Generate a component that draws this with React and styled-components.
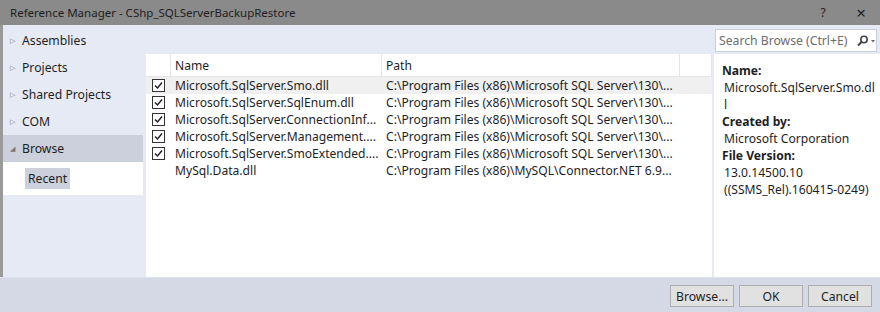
import React from 'react'
import styled, { createGlobalStyle } from 'styled-components'

const Global = createGlobalStyle`
  body {
    margin: 0;
    font-family: 'Noto Sans', 'Open Sans', sans-serif;
    font-size: 12px;
    color: #1e1e1e;
  }
`

const Window = styled.div`
  width: 880px;
  height: 312px;
  display: flex;
  flex-direction: column;
  overflow: hidden;
`

const TitleBar = styled.div`
  height: 25px;
  background: #8a8a8a;
  display: flex;
  align-items: center;
  padding-left: 10px;
  font-size: 11.5px;
  color: #1e1e1e;
`

const TitleText = styled.span`
  flex: 1;
`

const TitleButton = styled.span`
  width: 38px;
  text-align: center;
  font-size: ${p => p.$big ? '17px' : '12px'};
  color: #222;
`

const Body = styled.div`
  flex: 1;
  display: flex;
  background: #e6eaf5;
  border-left: 3px solid #9a9a9a;
`

const Sidebar = styled.div`
  width: 140px;
  padding-top: 2px;
  display: flex;
  flex-direction: column;
`

const NavItem = styled.div`
  height: 27px;
  display: flex;
  align-items: center;
  padding-left: 7px;
  font-size: 12.2px;
  background: ${p => p.$active ? '#ccd0dc' : 'transparent'};
`

const Arrow = styled.span`
  width: 12px;
  font-size: 7px;
  color: #777;
`

const SubPanel = styled.div`
  background: #fff;
  height: 33px;
  display: flex;
  align-items: center;
  padding-left: 22px;
`

const SubItem = styled.span`
  background: #ccd0dc;
  padding: 2px 3px;
  font-size: 12.2px;
`

const Main = styled.div`
  flex: 1;
  display: flex;
  flex-direction: column;
  padding-left: 3px;
`

const TopBar = styled.div`
  height: 29px;
  display: flex;
  justify-content: flex-end;
  align-items: flex-start;
  padding-top: 4px;
  box-sizing: border-box;
  padding-right: 3px;
`

const Search = styled.div`
  width: 162px;
  height: 23px;
  border: 1px solid #ccced8;
  background: #fff;
  display: flex;
  align-items: center;
  padding-left: 3px;
  color: #6d6d6d;
  font-size: 12.2px;
  box-sizing: border-box;
  gap: 3px;
`

const SearchText = styled.span`
  flex: 1;
  white-space: nowrap;
`

const Content = styled.div`
  flex: 1;
  display: flex;
  gap: 2px;
`

const List = styled.div`
  width: 566px;
  background: #fff;
  display: flex;
  flex-direction: column;
`

const Row = styled.div`
  height: 17px;
  display: grid;
  grid-template-columns: 25px 211px 298px 1fr;
  align-items: center;
  font-size: 12.1px;
  background: ${p => p.$hl ? '#f0f0f0' : 'transparent'};
`

const HeaderRow = styled(Row)`
  height: 22px;
  border-bottom: 1px solid #e5e5e5;
  align-items: stretch;
`

const HeadCell = styled.div`
  border-right: 1px solid #e5e5e5;
  display: flex;
  align-items: center;
  padding-left: 4px;
`

const Cell = styled.div`
  padding-left: 4px;
  white-space: nowrap;
`

const CheckCell = styled.div`
  display: flex;
  justify-content: center;
`

const Box = styled.span`
  width: 11px;
  height: 11px;
  border: 1px solid #333;
  background: #fff;
  display: flex;
  align-items: center;
  justify-content: center;
`

const Details = styled.div`
  flex: 1;
  background: #fff;
  padding: 8px 0 0 8px;
  font-size: 12.1px;
  line-height: 17px;
`

const Label = styled.div`
  font-weight: bold;
`

const Value = styled.div`
  padding-left: 2px;
`

const Footer = styled.div`
  height: 35px;
  background: #d5d9e6;
  border-top: 1px solid #dde1ec;
  display: flex;
  justify-content: flex-end;
  align-items: center;
  gap: 5px;
  padding-right: 8px;
  box-sizing: border-box;
  padding-top: 2px;
`

const Button = styled.button`
  width: 64px;
  height: 22px;
  background: #e1e1e1;
  border: 1px solid #adadad;
  font-family: 'Noto Sans', 'Open Sans', sans-serif;
  font-size: 12.2px;
  color: #1e1e1e;
  padding: 0;
`

const Check = () => (
  <Box>
    <svg width="9" height="9" viewBox="0 0 9 9">
      <path d="M1 4.5 L3.5 7 L8 1.5" fill="none" stroke="#222" strokeWidth="1.5" />
    </svg>
  </Box>
)

const Magnifier = () => (
  <svg width="20" height="12" viewBox="0 0 20 12">
    <circle cx="8" cy="4.5" r="3.2" fill="none" stroke="#444" strokeWidth="1.6" />
    <path d="M5.8 6.8 L2 10.5" stroke="#444" strokeWidth="2" />
    <path d="M15 5 L19 5 L17 7.5 Z" fill="#666" />
  </svg>
)

const rows = [
  ['Microsoft.SqlServer.Smo.dll', 'C:\\Program Files (x86)\\Microsoft SQL Server\\130\\...', true],
  ['Microsoft.SqlServer.SqlEnum.dll', 'C:\\Program Files (x86)\\Microsoft SQL Server\\130\\...', true],
  ['Microsoft.SqlServer.ConnectionInf...', 'C:\\Program Files (x86)\\Microsoft SQL Server\\130\\...', true],
  ['Microsoft.SqlServer.Management....', 'C:\\Program Files (x86)\\Microsoft SQL Server\\130\\...', true],
  ['Microsoft.SqlServer.SmoExtended....', 'C:\\Program Files (x86)\\Microsoft SQL Server\\130\\...', true],
  ['MySql.Data.dll', 'C:\\Program Files (x86)\\MySQL\\Connector.NET 6.9...', false],
]

const nav = ['Assemblies', 'Projects', 'Shared Projects', 'COM']

const App = () => {
  return (
    <Window>
      <Global />
      <TitleBar>
        <TitleText>Reference Manager - CShp_SQLServerBackupRestore</TitleText>
        <TitleButton>?</TitleButton>
        <TitleButton $big>×</TitleButton>
      </TitleBar>
      <Body>
        <Sidebar>
          {nav.map(n => (
            <NavItem key={n}><Arrow>▷</Arrow>{n}</NavItem>
          ))}
          <NavItem $active><Arrow>◢</Arrow>Browse</NavItem>
          <SubPanel><SubItem>Recent</SubItem></SubPanel>
        </Sidebar>
        <Main>
          <TopBar>
            <Search>
              <SearchText>Search Browse (Ctrl+E)</SearchText>
              <Magnifier />
            </Search>
          </TopBar>
          <Content>
            <List>
              <HeaderRow>
                <HeadCell />
                <HeadCell>Name</HeadCell>
                <HeadCell>Path</HeadCell>
                <HeadCell />
              </HeaderRow>
              {rows.map(([name, path, checked], i) => (
                <Row key={i} $hl={i === 0}>
                  <CheckCell>{checked && <Check />}</CheckCell>
                  <Cell>{name}</Cell>
                  <Cell>{path}</Cell>
                  <Cell />
                </Row>
              ))}
            </List>
            <Details>
              <Label>Name:</Label>
              <Value>Microsoft.SqlServer.Smo.dl</Value>
              <Value>l</Value>
              <Label>Created by:</Label>
              <Value>Microsoft Corporation</Value>
              <Label>File Version:</Label>
              <Value>13.0.14500.10</Value>
              <Value>((SSMS_Rel).160415-0249)</Value>
            </Details>
          </Content>
        </Main>
      </Body>
      <Footer>
        <Button>Browse...</Button>
        <Button>OK</Button>
        <Button>Cancel</Button>
      </Footer>
    </Window>
  )
}

export default App
